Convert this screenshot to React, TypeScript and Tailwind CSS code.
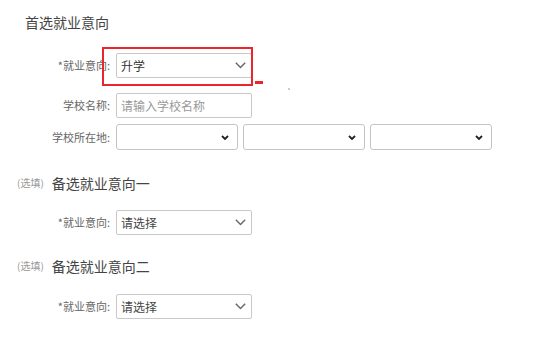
const font = { fontFamily: '"Noto Sans CJK SC", "Liberation Sans", sans-serif' };

function Chevron() {
  return (
    <svg width="11" height="7" viewBox="0 0 11 7" fill="none">
      <path d="M0.8 0.8 L5.5 5.6 L10.2 0.8" stroke="#666" strokeWidth="1.4" />
    </svg>
  );
}

function SmallChevron() {
  return (
    <svg width="8" height="5" viewBox="0 0 8 5" fill="none">
      <path d="M1 1 L4 4 L7 1" stroke="#222" strokeWidth="1.8" />
    </svg>
  );
}

function FakeSelect({ value, placeholder }: { value: string; placeholder?: boolean }) {
  return (
    <div className="w-[136px] h-[25px] border border-[#c9c9c9] rounded-[2px] bg-white flex items-center justify-between pl-[4px] pr-[5px]">
      <span className={`text-[12px] leading-none ${placeholder ? "text-[#444]" : "text-[#333]"}`}>{value}</span>
      <Chevron />
    </div>
  );
}

function NativeSelect() {
  return (
    <div className="w-[122px] h-[26px] border border-[#c4c4c4] rounded-[3px] bg-white flex items-center justify-end pr-[8px]">
      <SmallChevron />
    </div>
  );
}

function Row({ label, children, className }: { label: string; children: React.ReactNode; className?: string }) {
  return (
    <div className={`flex items-center ${className ?? ""}`}>
      <div className="w-[110px] text-right text-[11px] leading-none text-[#666]">{label}</div>
      <div className="ml-[6px] flex gap-[5px]">{children}</div>
    </div>
  );
}

function SubTitle({ title, className }: { title: string; className?: string }) {
  return (
    <div className={`flex items-center pl-[17px] h-[16px] ${className ?? ""}`}>
      <span className="text-[10px] text-[#999] leading-none">(选填)</span>
      <span className="ml-[8px] text-[14px] text-[#444] leading-none">{title}</span>
    </div>
  );
}

export default function App() {
  return (
    <div className="relative w-[558px] h-[338px] bg-white overflow-hidden" style={font}>
      <div className="pl-[25px] pt-[14px] h-[30px] text-[14px] leading-[16px] text-[#444]">首选就业意向</div>

      <Row label="*就业意向:" className="mt-[23px]">
        <FakeSelect value="升学" />
      </Row>

      <Row label="学校名称:" className="mt-[15px]">
        <div className="w-[136px] h-[25px] border border-[#c9c9c9] rounded-[2px] bg-white flex items-center pl-[4px]">
          <span className="text-[12px] leading-none text-[#999]">请输入学校名称</span>
        </div>
      </Row>

      <Row label="学校所在地:" className="mt-[6px]">
        <NativeSelect />
        <NativeSelect />
        <NativeSelect />
      </Row>

      <SubTitle title="备选就业意向一" className="mt-[25px]" />

      <Row label="*就业意向:" className="mt-[19px]">
        <FakeSelect value="请选择" placeholder />
      </Row>

      <SubTitle title="备选就业意向二" className="mt-[23px]" />

      <Row label="*就业意向:" className="mt-[20px]">
        <FakeSelect value="请选择" placeholder />
      </Row>

      {/* annotation overlay */}
      <div className="absolute left-[102px] top-[47px] w-[151px] h-[39px] border-2 border-[#e8262b]" />
      <div className="absolute left-[255px] top-[81px] w-[8px] h-[3px] bg-[#e8262b]" />
      <div className="absolute left-[288px] top-[88px] w-[2px] h-[2px] rounded-full bg-[#bbb]" />
    </div>
  );
}
